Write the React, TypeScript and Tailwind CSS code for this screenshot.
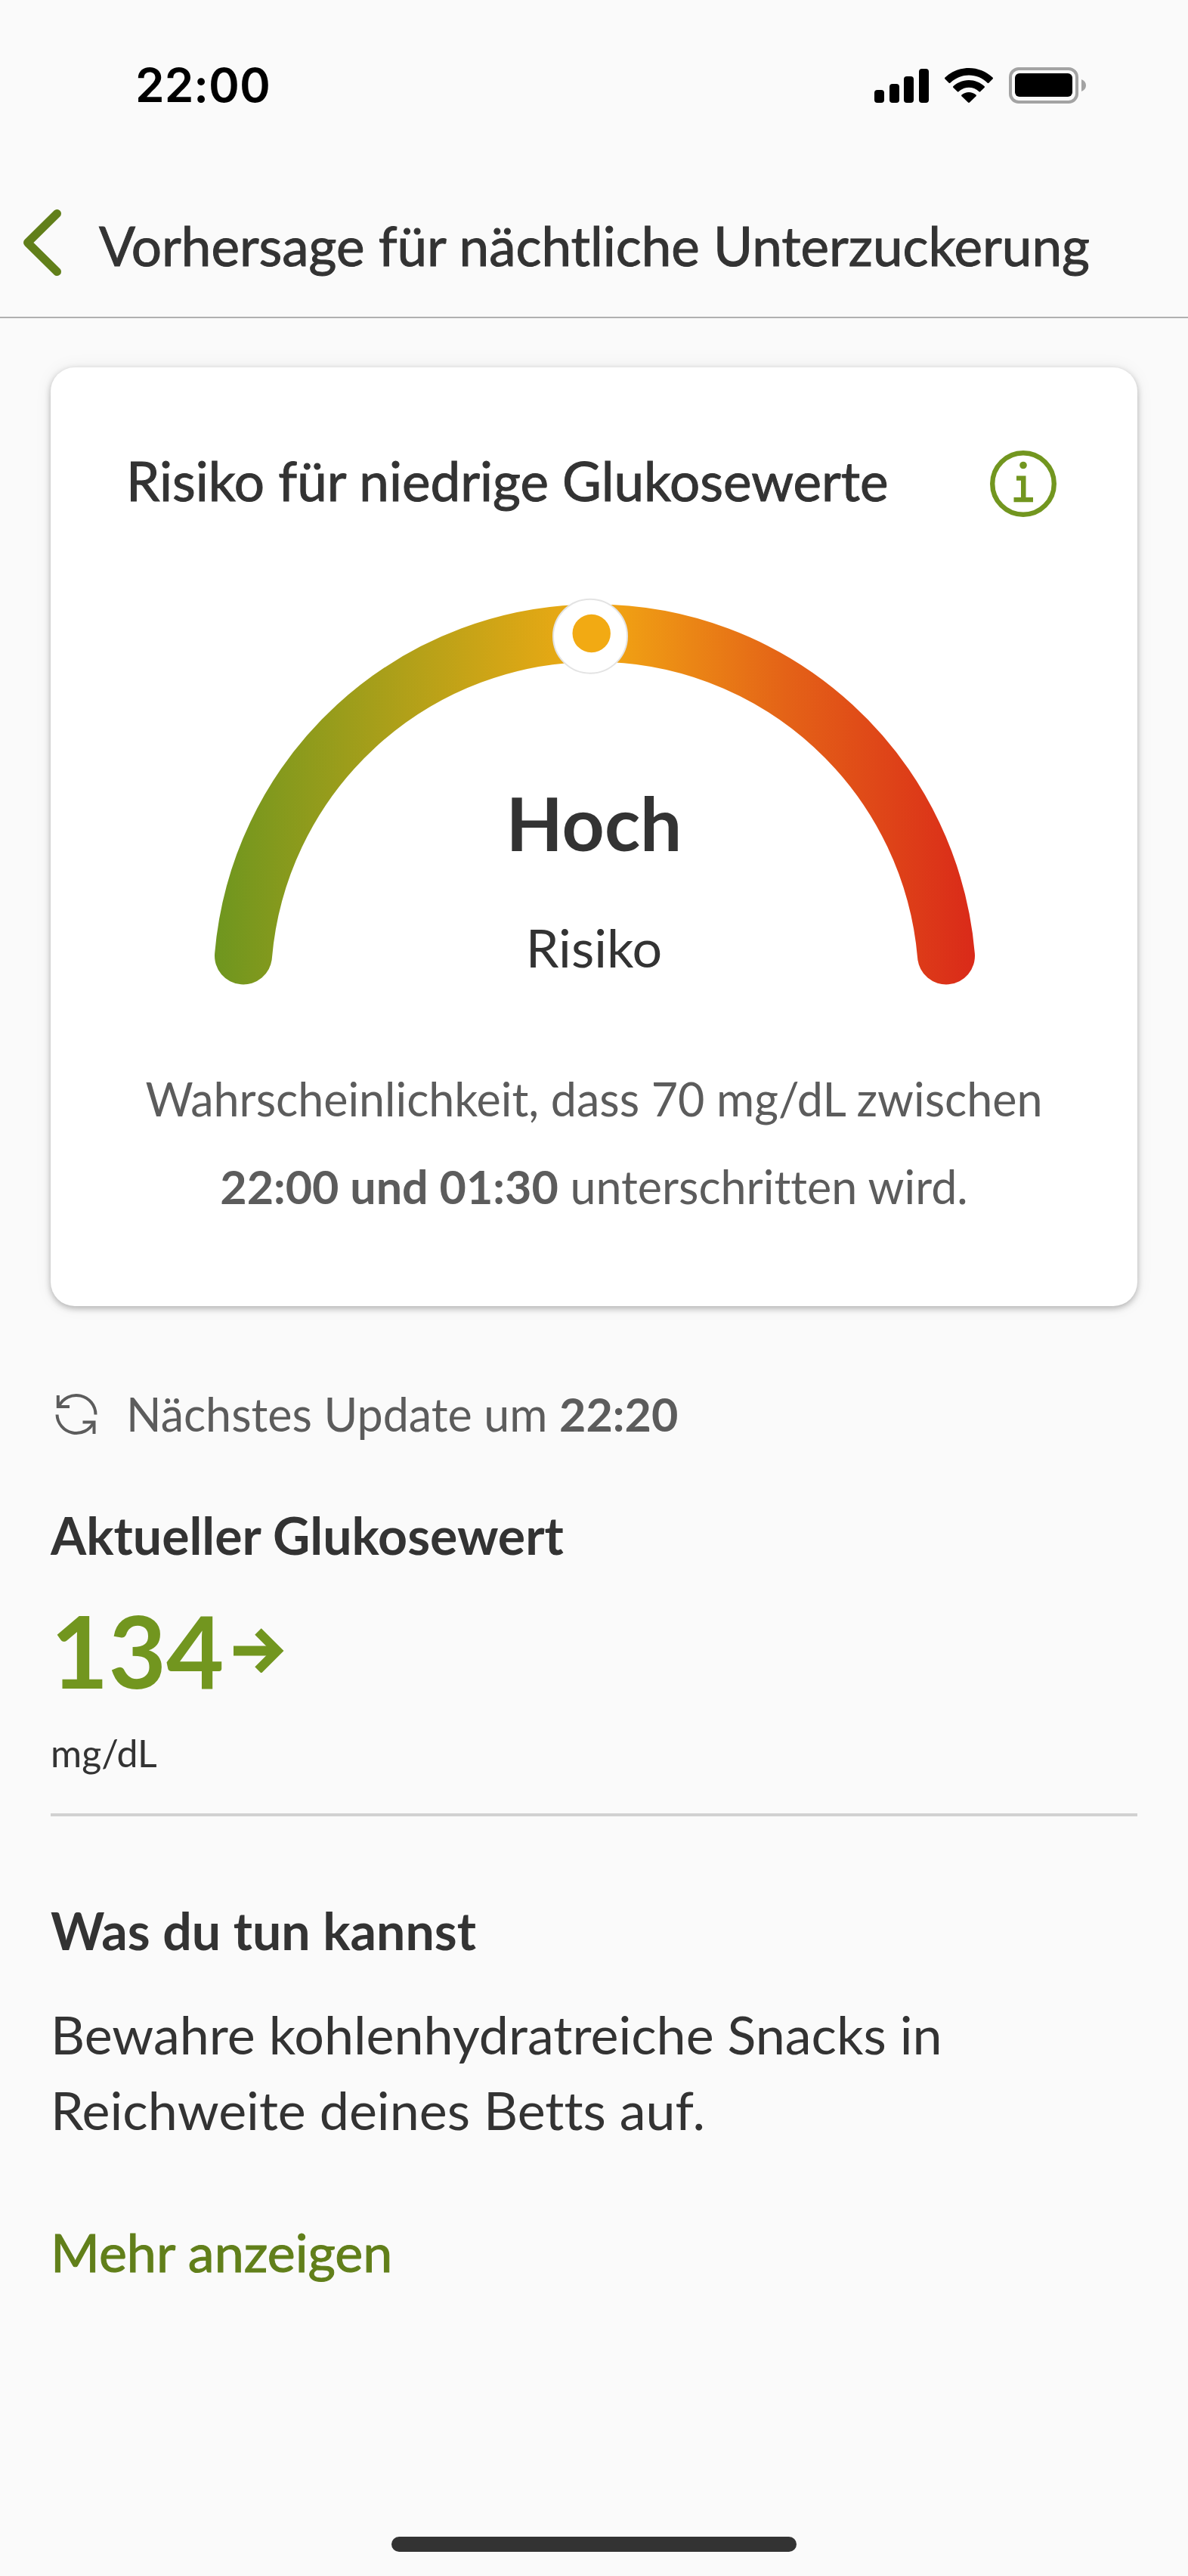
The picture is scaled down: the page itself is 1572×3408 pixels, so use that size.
import React from "react";

const SignalIcon = () => (
  <svg className="h-[46px] w-[72px]" viewBox="0 0 72 46" aria-hidden="true">
    <rect x="0" y="29" width="13" height="17" rx="4" />
    <rect x="20" y="21" width="13" height="25" rx="4" />
    <rect x="39" y="11" width="13" height="35" rx="4" />
    <rect x="59" y="1" width="13" height="45" rx="4" />
  </svg>
);

const WifiIcon = () => (
  <svg className="h-[46px] w-16" viewBox="0 0 64 46" aria-hidden="true">
    <path d="M32 0C44 0 55 4.600 63.500 12.600Q64.500 13.600 63.500 14.600L58.500 19.600Q57.500 20.600 56.500 19.600C50 13.200 41.500 9.600 32 9.600S14 13.200 7.500 19.600Q6.500 20.600 5.500 19.600L.5 14.600Q-.5 13.600 .5 12.600C9 4.600 20 0 32 0Z" />
    <path d="M32 16C39.800 16 47 19 52.500 24Q53.500 25 52.500 26L47.300 31Q46.300 32 45.300 31C41.700 27.600 37 25.700 32 25.700S22.300 27.600 18.700 31Q17.700 32 16.700 31L11.500 26Q10.500 25 11.500 24C17 19 24.200 16 32 16Z" />
    <path d="M32 32C35.500 32 38.800 33.300 41.500 35.500Q42.300 36.200 41.500 37.200L33 45.500Q32 46.400 31 45.500L22.500 37.200Q21.700 36.200 22.500 35.500C25.200 33.300 28.500 32 32 32Z" />
  </svg>
);

const BatteryIcon = () => (
  <svg className="h-12 w-[102px]" viewBox="0 0 102 48" aria-hidden="true">
    <rect x="2" y="2" width="88" height="44" rx="11" fill="none" stroke="#a3a3a3" strokeWidth="4" />
    <rect x="8" y="8" width="76" height="31" rx="6" />
    <path d="M96 16C100 17.500 102 20.500 102 24S100 30.500 96 32Z" fill="#a3a3a3" />
  </svg>
);

const InfoIcon = () => (
  <svg className="h-[88px] w-[88px]" viewBox="0 0 88 88" aria-hidden="true">
    <circle cx="44" cy="44" r="40.800" fill="none" stroke="#72961f" strokeWidth="6.400" />
    <circle cx="44" cy="19.500" r="4.800" fill="#72961f" />
    <path d="M35 33.500H47.500V62H57V68.300H31.500V62H41V39.800H35Z" fill="#72961f" />
  </svg>
);

const RefreshIcon = () => (
  <svg
    className="h-14 w-14 shrink-0"
    viewBox="0 0 56 56"
    fill="none"
    stroke="#5c5c5c"
    strokeWidth="4"
    aria-hidden="true"
  >
    <path d="M53.500 28.500A25.500 25.500 0 0 0 5 17.500" />
    <path d="M3.800 3V18H19" />
    <path d="M2.500 28.500A25.500 25.500 0 0 0 51 38.500" />
    <path d="M36.500 38.500H51.500V54" />
  </svg>
);

const RiskGauge = () => (
  <svg
    className="col-start-1 row-start-1 w-[1010px] max-w-full overflow-visible"
    viewBox="0 0 1010 512"
    aria-hidden="true"
  >
    <defs>
      <linearGradient id="risk" gradientUnits="userSpaceOnUse" x1="2" y1="0" x2="1008" y2="0">
        <stop offset="0" stopColor="#6e961f" />
        <stop offset="0.500" stopColor="#f2aa13" />
        <stop offset="0.750" stopColor="#e46317" />
        <stop offset="1" stopColor="#da2a19" />
      </linearGradient>
    </defs>
    <path
      d="M41 473.500A466.700 466.700 0 0 1 971 473.500"
      fill="none"
      stroke="url(#risk)"
      strokeWidth="76"
      strokeLinecap="round"
    />
    <circle cx="500" cy="50.700" r="49" fill="#fff" stroke="#e3e3e3" strokeWidth="2" />
    <circle cx="501.700" cy="47" r="25.200" fill="#f2aa13" />
  </svg>
);

export default function App() {
  return (
    <div className="flex min-h-screen flex-col bg-[#fafafa] font-['Lato','Open_Sans',sans-serif] text-[#333333] [font-variant-ligatures:none]">
      <div className="flex items-center justify-between pt-[77px] pr-[135px] pb-[39px] pl-[179px] text-black">
        <span className="font-['Inter',sans-serif] text-[62px] leading-[72px] font-semibold">22:00</span>
        <div className="flex items-center gap-[21px]">
          <SignalIcon />
          <WifiIcon />
          <BatteryIcon />
        </div>
      </div>

      <header className="flex items-start gap-12 border-b-2 border-[#b0b0b0] pt-[89px] pb-[46px] pl-[31px]">
        <button type="button" aria-label="Zurück">
          <svg className="h-[88px] w-[52px]" viewBox="0 0 52 88" fill="none" aria-hidden="true">
            <path d="M44.500 5.500L5.500 44L44.500 82.500" stroke="#617f1a" strokeWidth="11" strokeLinecap="round" strokeLinejoin="round" />
          </svg>
        </button>
        <h1 className="text-[71px] leading-[96px] [-webkit-text-stroke:1px]">
          Vorhersage für nächtliche Unterzuckerung
        </h1>
      </header>

      <main className="px-[67px] pt-[65px]">
        <section className="rounded-[32px] bg-white pt-[110px] pb-[100px] shadow-[0_3px_8px_rgba(0,0,0,0.28),0_0_24px_rgba(0,0,0,0.06)]">
          <div className="flex items-start justify-between pr-[107px] pl-[100px]">
            <h2 className="text-[71px] leading-[80px] [-webkit-text-stroke:1px]">Risiko für niedrige Glukosewerte</h2>
            <button type="button" aria-label="Informationen zum Risiko">
              <InfoIcon />
            </button>
          </div>

          <div className="mt-[107px] grid justify-items-center">
            <RiskGauge />
            <div className="col-start-1 row-start-1 flex flex-col items-center gap-[69px] self-end pb-[10px]">
              <strong className="text-[98px] leading-[112px] font-bold">Hoch</strong>
              <span className="text-[70px] leading-[80px]">Risiko</span>
            </div>
          </div>

          <p className="mt-[93px] px-[100px] text-center text-[61px] leading-[116px] text-[#5c5c5c]">
            Wahrscheinlichkeit, dass 70 mg/dL zwischen <b className="font-bold">22:00 und 01:30</b> unterschritten
            wird.
          </p>
        </section>

        <div className="mt-[103px] flex items-center gap-[38px] pl-[6px] text-[#5c5c5c]">
          <RefreshIcon />
          <p className="text-[61px] leading-[80px]">
            Nächstes Update um <b className="font-bold">22:20</b>
          </p>
        </div>

        <section className="mt-20">
          <h2 className="text-[68px] leading-[80px] font-bold">Aktueller Glukosewert</h2>
          <div className="mt-[44px] flex items-center gap-3 text-[#72961f]">
            <span className="text-[132px] leading-[136px] font-bold">134</span>
            <svg className="h-[60px] w-[68px]" viewBox="0 0 68 60" fill="none" aria-label="gleichbleibend">
              <path d="M0 31H58" stroke="currentColor" strokeWidth="13" />
              <path d="M32.500 5.500L58 31L32.500 56.500" stroke="currentColor" strokeWidth="12" />
            </svg>
          </div>
          <p className="mt-9 text-[50px] leading-[64px]">mg/dL</p>
        </section>

        <hr className="mt-12 border-t-4 border-[#d1d1d1]" />

        <section className="mt-[111px]">
          <h2 className="text-[68px] leading-[80px] font-bold">Was du tun kannst</h2>
          <p className="mt-[47px] max-w-[1300px] text-[70px] leading-[100px]">
            Bewahre kohlenhydratreiche Snacks in Reichweite deines Betts auf.
          </p>
          <a
            href="#mehr"
            className="mt-[98px] inline-block text-[70px] leading-[80px] text-[#617f1a] [-webkit-text-stroke:1px]"
          >
            Mehr anzeigen
          </a>
        </section>
      </main>

      <div className="mt-auto flex justify-center pb-8">
        <div className="h-5 w-[536px] rounded-full bg-[#333333]" />
      </div>
    </div>
  );
}
